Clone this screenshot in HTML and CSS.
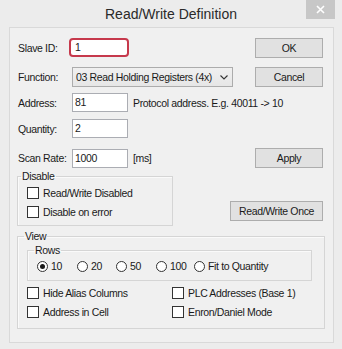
FILE: index.html
```html
<!DOCTYPE html>
<html>
<head>
<meta charset="utf-8">
<link rel="stylesheet" href="styles.css">
</head>
<body>
<div class="window">
  <div class="titlebar">
    <span></span>
    <div class="title">Read/Write Definition</div>
    <div class="close"><svg width="9" height="9" viewBox="0 0 9 9"><path d="M1 1L8 8M8 1L1 8" stroke="#fff" stroke-width="1.6"/></svg></div>
  </div>
  <div class="client">
    <div class="row r1">
      <span class="lbl">Slave ID:</span>
      <div class="field focus">1</div>
      <div class="btn">OK</div>
    </div>
    <div class="row r2">
      <span class="lbl">Function:</span>
      <div class="select"><span>03 Read Holding Registers (4x)</span><svg width="8" height="5" viewBox="0 0 8 5"><path d="M0.5 0.5L4 4L7.5 0.5" fill="none" stroke="#333" stroke-width="1.1"/></svg></div>
      <div class="btn">Cancel</div>
    </div>
    <div class="row r3">
      <span class="lbl">Address:</span>
      <div class="field">81</div>
      <span class="note">Protocol address. E.g. 40011 -&gt; 10</span>
    </div>
    <div class="row r4">
      <span class="lbl">Quantity:</span>
      <div class="field">2</div>
    </div>
    <div class="row r5">
      <span class="lbl">Scan Rate:</span>
      <div class="field">1000</div>
      <span class="note">[ms]</span>
      <div class="btn">Apply</div>
    </div>
    <div class="row r6">
      <fieldset class="group disable">
        <legend>Disable</legend>
        <div class="check"><span class="cb"></span>Read/Write Disabled</div>
        <div class="check"><span class="cb"></span>Disable on error</div>
      </fieldset>
      <div class="btn wide">Read/Write Once</div>
    </div>
    <fieldset class="group view">
      <legend>View</legend>
      <fieldset class="group rows">
        <legend>Rows</legend>
        <div class="radios">
          <div class="radio w40"><span class="rb on"></span>10</div>
          <div class="radio w39"><span class="rb"></span>20</div>
          <div class="radio w40"><span class="rb"></span>50</div>
          <div class="radio w38"><span class="rb"></span>100</div>
          <div class="radio"><span class="rb"></span>Fit to Quantity</div>
        </div>
      </fieldset>
      <div class="checks">
        <div class="check"><span class="cb"></span>Hide Alias Columns</div>
        <div class="check"><span class="cb"></span>PLC Addresses (Base 1)</div>
        <div class="check"><span class="cb"></span>Address in Cell</div>
        <div class="check"><span class="cb"></span>Enron/Daniel Mode</div>
      </div>
    </fieldset>
  </div>
</div>
</body>
</html>
```
FILE: styles.css
```css
html, body {
  margin: 0;
  padding: 0;
}
body {
  background: #ececec;
  font-family: "Liberation Sans", Arial, sans-serif;
  font-size: 10.5px;
  letter-spacing: -0.35px;
  color: #1a1a1a;
}
.window {
  width: 342px;
  height: 349px;
  overflow: hidden;
  background: #ececec;
}
.titlebar {
  height: 27px;
  display: grid;
  grid-template-columns: 1fr auto 1fr;
  align-items: start;
}
.title {
  font-size: 14px;
  letter-spacing: 0;
  line-height: 28px;
  color: #2a2a2a;
}
.close {
  justify-self: end;
  margin-right: 7px;
  width: 29px;
  height: 19px;
  background: #c7c7c7;
  display: flex;
  align-items: center;
  justify-content: center;
}
.client {
  box-sizing: border-box;
  margin: 0 8px 0 9px;
  height: 316px;
  border: 1px solid #d9d9d9;
  background: #f0f0f0;
  padding: 9px 9px 0 7px;
}
.row {
  display: flex;
  align-items: center;
}
.r1 { height: 21px; }
.r2 { height: 20px; margin-top: 9px; }
.r3 { height: 19px; margin-top: 6px; }
.r4 { height: 19px; margin-top: 7px; }
.r5 { height: 20px; margin-top: 10px; }
.r6 { align-items: flex-end; margin-top: 2px; }
.lbl {
  width: 54px;
  margin-left: 1px;
  white-space: nowrap;
}
.field {
  box-sizing: border-box;
  width: 56px;
  height: 19px;
  border: 1px solid #abadb3;
  background: #fff;
  padding-left: 2px;
  line-height: 17px;
}
.field.focus {
  margin-left: -3px;
  width: 60px;
  border: 2px solid #c6394c;
  border-radius: 4px;
  padding-left: 4px;
  line-height: 15px;
}
.select {
  box-sizing: border-box;
  width: 161px;
  height: 20px;
  border: 1px solid #acacac;
  background: linear-gradient(#f0f0f0, #e6e6e6);
  padding: 0 4px 0 3px;
  display: flex;
  align-items: center;
  justify-content: space-between;
  white-space: nowrap;
}
.note {
  margin-left: 5px;
  white-space: nowrap;
}
.btn {
  box-sizing: border-box;
  margin-left: auto;
  margin-right: 1px;
  width: 68px;
  height: 20px;
  border: 1px solid #adadad;
  background: #e1e1e1;
  display: flex;
  align-items: center;
  justify-content: center;
  white-space: nowrap;
}
.btn.wide {
  width: 93px;
  margin-bottom: 5px;
}
.group {
  box-sizing: border-box;
  margin: 0;
  padding: 0;
  min-width: 0;
  border: 1px solid #d5d5d5;
  box-shadow: inset 1px 1px 0 #fafafa;
}
.group legend {
  padding: 0 1px;
  line-height: 12px;
  white-space: nowrap;
}
.disable {
  width: 156px;
  height: 56px;
  padding-top: 1px;
}
.disable legend {
  margin-left: 3px;
}
.check {
  display: flex;
  align-items: center;
  height: 19px;
  white-space: nowrap;
}
.disable .check {
  margin-left: 9px;
}
.cb {
  box-sizing: border-box;
  width: 12px;
  height: 12px;
  border: 1px solid #333;
  background: #fff;
  margin-right: 4px;
  flex: none;
}
.view {
  width: 308px;
  height: 99px;
  margin-top: 4px;
}
.view > legend {
  margin-left: 6px;
}
.rows {
  width: 285px;
  height: 37px;
  margin: 2px 0 0 9px;
}
.rows legend {
  margin-left: 6px;
}
.radios {
  display: flex;
  align-items: center;
  height: 20px;
  padding-left: 9px;
}
.radio {
  display: flex;
  align-items: center;
  white-space: nowrap;
}
.w40 { width: 40px; }
.w39 { width: 39px; }
.w38 { width: 38px; }
.rb {
  box-sizing: border-box;
  width: 11px;
  height: 11px;
  border: 1px solid #333;
  border-radius: 50%;
  background: #fff;
  margin-right: 3px;
  flex: none;
  display: flex;
  align-items: center;
  justify-content: center;
}
.rb.on::after {
  content: "";
  width: 5px;
  height: 5px;
  border-radius: 50%;
  background: #1a1a1a;
}
.checks {
  display: grid;
  grid-template-columns: 145px auto;
  margin: 2px 0 0 9px;
}
```
